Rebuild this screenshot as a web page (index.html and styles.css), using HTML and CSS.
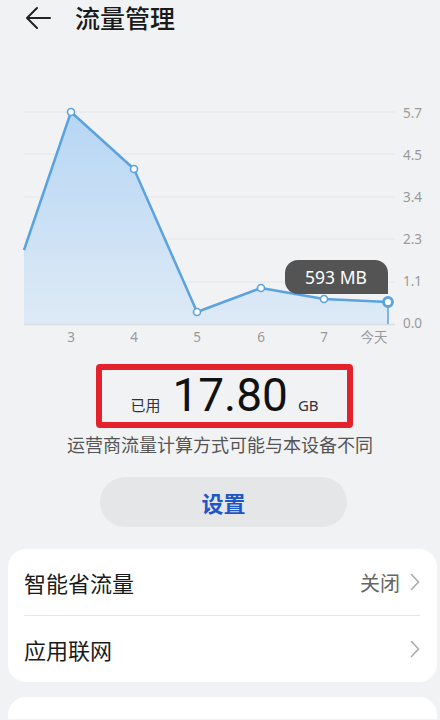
FILE: index.html
```html
<!DOCTYPE html>
<html lang="zh-CN">
<head>
    <meta charset="UTF-8">
    <meta name="viewport" content="width=device-width, initial-scale=1.0">
    <title>流量管理</title>
    <link rel="stylesheet" href="styles.css">
</head>
<body>
    <header class="top-bar">
        <svg class="back-icon" width="28" height="24" viewBox="0 0 28 24">
            <path d="M26 12H3M13 2L3 12l10 10" fill="none" stroke="#222" stroke-width="2" stroke-linecap="round" stroke-linejoin="round"/>
        </svg>
        <h1 class="page-title">流量管理</h1>
    </header>

    <div class="chart">
        <svg width="440" height="315" viewBox="0 35 440 315">
            <defs>
                <linearGradient id="areaFill" x1="0" y1="0" x2="0" y2="1">
                    <stop offset="0" stop-color="#b6d6f4"/>
                    <stop offset="1" stop-color="#deeaf6"/>
                </linearGradient>
            </defs>
            <!-- grid -->
            <g stroke="#e4e6e9" stroke-width="1">
                <line x1="24" y1="112" x2="395" y2="112"/>
                <line x1="24" y1="154" x2="395" y2="154"/>
                <line x1="24" y1="197" x2="395" y2="197"/>
                <line x1="24" y1="239" x2="395" y2="239"/>
                <line x1="24" y1="282" x2="395" y2="282"/>
            </g>
            <polygon points="24,324 24,250 71,112 134,169 197,312 261,288 324,299 388,302 388,324" fill="url(#areaFill)"/>
            <line x1="24" y1="324.5" x2="395" y2="324.5" stroke="#d9dce0" stroke-width="1.5"/>
            <polyline points="24,250 71,112 134,169 197,312 261,288 324,299 388,302" fill="none" stroke="#5aa2e0" stroke-width="2.5" stroke-linejoin="round"/>
            <line x1="388" y1="302" x2="388" y2="324" stroke="#5aa2e0" stroke-width="1.5"/>
            <g fill="#fff" stroke="#5aa2e0" stroke-width="1.6">
                <circle cx="71" cy="112" r="3.5"/>
                <circle cx="134" cy="169" r="3.5"/>
                <circle cx="197" cy="312" r="3.5"/>
                <circle cx="261" cy="288" r="3.5"/>
                <circle cx="324" cy="299" r="3.5"/>
            </g>
            <circle cx="388" cy="302" r="4.5" fill="#fff" stroke="#5aa2e0" stroke-width="2.8"/>

            <!-- tooltip -->
            <rect x="285" y="260" width="103" height="34" rx="13" fill="#545454"/>
            <rect x="370" y="278" width="18" height="16" fill="#545454"/>
            <text class="tip-text" x="336" y="284" text-anchor="middle">593 MB</text>

            <g class="axis-text">
                <text x="403" y="118">5.7</text>
                <text x="403" y="160">4.5</text>
                <text x="403" y="202">3.4</text>
                <text x="403" y="244">2.3</text>
                <text x="403" y="286">1.1</text>
                <text x="403" y="328">0.0</text>
            </g>
            <g class="axis-text" text-anchor="middle">
                <text x="71" y="342">3</text>
                <text x="134" y="342">4</text>
                <text x="197" y="342">5</text>
                <text x="261" y="342">6</text>
                <text x="324" y="342">7</text>
                <text x="374" y="342">今天</text>
            </g>
        </svg>
    </div>

    <div class="usage-box">
        <span class="usage-label">已用</span>
        <span class="usage-value">17.80</span>
        <span class="usage-unit">GB</span>
    </div>
    <p class="usage-note">运营商流量计算方式可能与本设备不同</p>

    <button class="settings-btn" type="button">设置</button>

    <section class="card">
        <div class="row">
            <span class="row-title">智能省流量</span>
            <span class="row-right">
                <span class="row-value">关闭</span>
                <svg class="chevron" width="10" height="18" viewBox="0 0 10 18"><path d="M1.5 1.5L8.5 9l-7 7.5" fill="none" stroke="#aaa" stroke-width="1.6" stroke-linecap="round" stroke-linejoin="round"/></svg>
            </span>
        </div>
        <div class="row">
            <span class="row-title">应用联网</span>
            <span class="row-right">
                <svg class="chevron" width="10" height="18" viewBox="0 0 10 18"><path d="M1.5 1.5L8.5 9l-7 7.5" fill="none" stroke="#aaa" stroke-width="1.6" stroke-linecap="round" stroke-linejoin="round"/></svg>
            </span>
        </div>
    </section>

    <section class="card card-next"></section>
</body>
</html>
```

FILE: styles.css
```css
body {
    margin: 0;
    padding: 0;
    background: #f1f2f4;
    font-family: "Noto Sans CJK SC", "Noto Sans", sans-serif;
    color: #1a1a1a;
    overflow: hidden;
}
.top-bar {
    display: flex;
    align-items: center;
    height: 35px;
    padding-left: 24px;
}
.back-icon {
    display: block;
}
.page-title {
    margin: 0 0 0 23px;
    font-size: 25px;
    font-weight: 500;
    line-height: 35px;
    color: #1a1a1a;
}
.chart svg {
    display: block;
}
.axis-text {
    font-family: "Noto Sans", "Noto Sans CJK SC", sans-serif;
    font-size: 13.5px;
    fill: #9a9a9a;
}
.tip-text {
    font-family: "Noto Sans", sans-serif;
    font-size: 17.5px;
    fill: #fff;
}
.usage-box {
    box-sizing: border-box;
    width: 257px;
    height: 64px;
    margin: 14px 0 0 96px;
    border: 6px solid #e3222b;
    border-radius: 4px;
    display: flex;
    align-items: baseline;
    justify-content: center;
    line-height: 50px;
}
.usage-label {
    font-size: 15px;
    color: #333;
    margin-right: 12px;
}
.usage-value {
    font-family: Roboto, "Noto Sans", sans-serif;
    font-size: 46px;
    color: #111;
}
.usage-unit {
    font-family: "Noto Sans", sans-serif;
    font-size: 15px;
    color: #333;
    margin-left: 10px;
}
.usage-note {
    margin: 4px 0 0;
    text-align: center;
    font-size: 18px;
    line-height: 24px;
    color: #555;
}
.settings-btn {
    display: block;
    width: 247px;
    height: 50px;
    margin: 21px 0 0 100px;
    border: none;
    border-radius: 25px;
    background: #e5e6e8;
    color: #1d57c6;
    font-family: "Noto Sans CJK SC", sans-serif;
    font-size: 22px;
    font-weight: 600;
}
.card {
    margin: 22px 3px 0 8px;
    background: #fff;
    border-radius: 18px;
    padding: 0 17px 0 16px;
}
.row {
    display: flex;
    align-items: center;
    justify-content: space-between;
    height: 66px;
}
.row + .row {
    border-top: 1px solid #e6e6e6;
    height: 66px;
}
.row-title {
    font-size: 22px;
    line-height: 30px;
    color: #1a1a1a;
}
.row-right {
    display: flex;
    align-items: center;
}
.row-value {
    font-size: 20px;
    color: #666;
    margin-right: 10px;
}
.chevron {
    display: block;
}
.card-next {
    margin-top: 15px;
    height: 22px;
    border-radius: 18px 18px 0 0;
}
```
